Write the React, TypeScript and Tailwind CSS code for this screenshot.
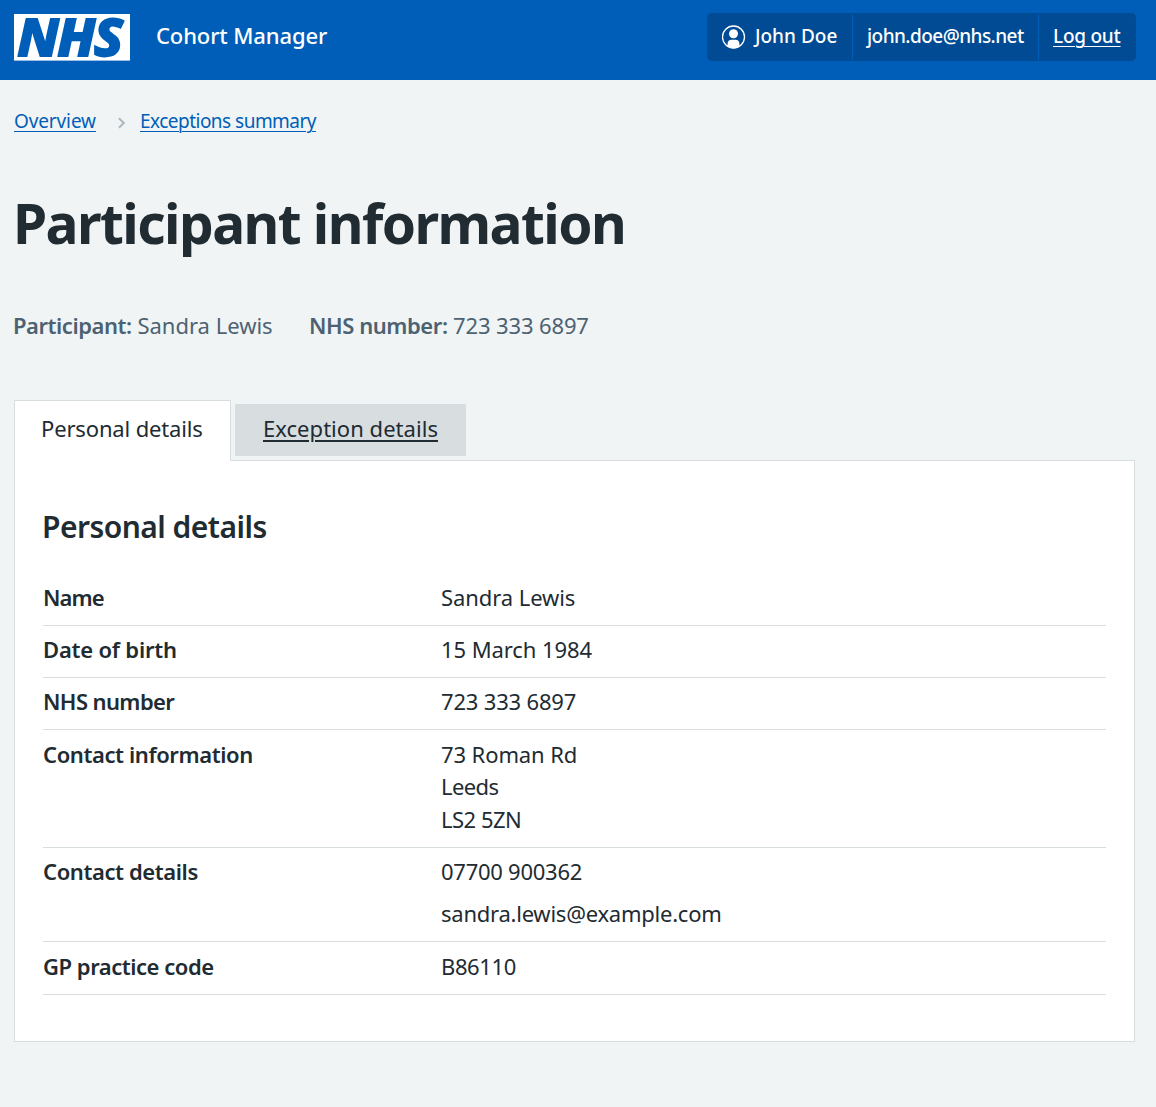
import type { ReactNode } from "react";

function NhsLogo() {
  return (
    <svg className="h-[47px] w-[116px] shrink-0 overflow-visible" viewBox="0 0 116 47" role="img" aria-label="NHS">
      <rect width="116" height="46.6" fill="#fff" />
      <text
        x="3.3"
        y="41.8"
        fill="#005eb8"
        stroke="#005eb8"
        strokeWidth="1.8"
        fontFamily="'Noto Sans', sans-serif"
        fontWeight="800"
        fontStyle="italic"
        fontSize="51.5"
        letterSpacing="-1.5"
        textLength="104"
        lengthAdjust="spacingAndGlyphs"
      >
        NHS
      </text>
    </svg>
  );
}

function UserIcon() {
  return (
    <svg className="size-6 shrink-0" viewBox="0 0 24 24" aria-hidden="true">
      <defs>
        <clipPath id="user-disc">
          <circle cx="11.5" cy="12" r="11.2" />
        </clipPath>
      </defs>
      <g clipPath="url(#user-disc)" fill="#fff">
        <circle cx="11.5" cy="8.7" r="4.5" />
        <path d="M5.6 24v-5.2c0-2.6 1.6-4.1 4-4.1h3.8c2.4 0 4 1.5 4 4.1V24z" />
      </g>
      <circle cx="11.5" cy="12" r="11" fill="none" stroke="#fff" strokeWidth="1.3" />
    </svg>
  );
}

function Header() {
  return (
    <header className="flex h-20 items-start bg-[#005eb8] pr-5 pl-3.5 text-white">
      <div className="pt-3.5">
        <NhsLogo />
      </div>
      <span className="ml-[26px] pt-5 text-[22px] leading-[30px] font-medium tracking-[-0.12px]">
        Cohort Manager
      </span>
      <ul className="mt-[13px] ml-auto flex h-12 overflow-hidden rounded-[5px] bg-[#004b93] py-px text-[19px] leading-[44px]">
        <li className="flex w-[146px] gap-[9px] border-r border-[#005eb8] pl-[15px] font-medium">
          <span className="pt-[11px]">
            <UserIcon />
          </span>
          <span>John Doe</span>
        </li>
        <li className="w-[186px] border-r border-[#005eb8] pl-3.5 font-medium tracking-[-0.55px]">
          john.doe@nhs.net
        </li>
        <li className="w-[97px] pl-3.5">
          <a href="#" className="font-medium tracking-[-0.25px] underline decoration-1 underline-offset-[3px]">
            Log out
          </a>
        </li>
      </ul>
    </header>
  );
}

function Breadcrumbs() {
  return (
    <nav className="flex h-7 items-center text-[19px] leading-7 text-[#005eb8]">
      <a href="#" className="w-[82px] tracking-[-0.12px] underline decoration-1 underline-offset-[3px]">
        Overview
      </a>
      <svg className="mr-3.5 ml-[21px] mt-[3px] h-3 w-2 shrink-0" viewBox="0 0 8 12" aria-hidden="true">
        <path d="M1.9 1.2 6.8 6 1.9 10.8" fill="none" stroke="#aeb7bd" strokeWidth="1.9" />
      </svg>
      <a href="#" className="ml-px tracking-[-0.52px] underline decoration-1 underline-offset-[3px]">
        Exceptions summary
      </a>
    </nav>
  );
}

function SummaryRow({ label, children, className }: { label: ReactNode; children: ReactNode; className: string }) {
  return (
    <div className={`flex border-b border-[#d8dde0] leading-[32.5px] ${className}`}>
      <dt className="w-[398px] shrink-0 font-semibold">{label}</dt>
      <dd>{children}</dd>
    </div>
  );
}

export default function App() {
  return (
    <div className="min-h-[1107px] bg-[#f0f4f5] font-['Noto_Sans',sans-serif] text-[22px] text-[#212b32]">
      <Header />
      <main className="pt-[27px] pr-[21px] pl-3.5">
        <Breadcrumbs />
        <h1 className="-ml-px mt-[53px] text-[55px] leading-[70px] font-bold tracking-[-1.55px]">
          Participant information
        </h1>
        <p className="-ml-px mt-[51px] flex h-8 leading-8 whitespace-pre text-[#4c6272]">
          <span className="w-[296px]">
            <b className="font-semibold tracking-[-0.45px]">Participant:</b>
            <span> Sandra Lewis</span>
          </span>
          <span>
            <b className="font-semibold tracking-[-0.44px]">NHS number:</b>
            <span className="tracking-[-0.13px]"> 723 333 6897</span>
          </span>
        </p>
        <div className="mt-[59px] flex h-[60px] items-start gap-1">
          <div className="relative z-10 h-[61px] w-[217px] shrink-0 border border-b-0 border-[#d8dde0] bg-white pl-[26px] leading-[55px] tracking-[-0.15px]">
            Personal details
          </div>
          <a
            href="#"
            className="mt-1 h-[52px] w-[231px] bg-[#d8dde0] pl-7 leading-[48px] tracking-[0.04px] underline decoration-2 underline-offset-[3px]"
          >
            Exception details
          </a>
        </div>
        <section className="h-[582px] border border-[#d8dde0] bg-white pr-7 pl-7 pt-[46px]">
          <h2 className="-ml-px text-[30px] leading-[40px] font-semibold tracking-[-0.53px]">Personal details</h2>
          <dl className="mt-7">
            <SummaryRow label={<span className="tracking-[-0.9px]">Name</span>} className="h-[51px] pt-1.5">
              <span className="tracking-[-0.08px]">Sandra Lewis</span>
            </SummaryRow>
            <SummaryRow label={<span className="tracking-[-0.2px]">Date of birth</span>} className="h-[52px] pt-[7px]">
              <span className="tracking-[-0.08px]">15 March 1984</span>
            </SummaryRow>
            <SummaryRow label={<span className="tracking-[-0.6px]">NHS number</span>} className="h-[52px] pt-[7px]">
              <span className="tracking-[-0.18px]">723 333 6897</span>
            </SummaryRow>
            <SummaryRow label={<span className="tracking-[-0.4px]">Contact information</span>} className="h-[118px] pt-2">
              <p className="tracking-[-0.1px]">73 Roman Rd</p>
              <p className="-mt-px tracking-[-0.6px]">Leeds</p>
              <p className="mt-px tracking-[-0.5px]">LS2 5ZN</p>
            </SummaryRow>
            <SummaryRow label={<span className="tracking-[-0.4px]">Contact details</span>} className="h-[94px] pt-[7px]">
              <p className="tracking-[-0.26px]">07700 900362</p>
              <p className="mt-[9px] tracking-[-0.24px]">sandra.lewis@example.com</p>
            </SummaryRow>
            <SummaryRow label={<span className="tracking-[-0.46px]">GP practice code</span>} className="h-[53px] pt-2">
              <span className="tracking-[-0.4px]">B86110</span>
            </SummaryRow>
          </dl>
        </section>
      </main>
    </div>
  );
}
